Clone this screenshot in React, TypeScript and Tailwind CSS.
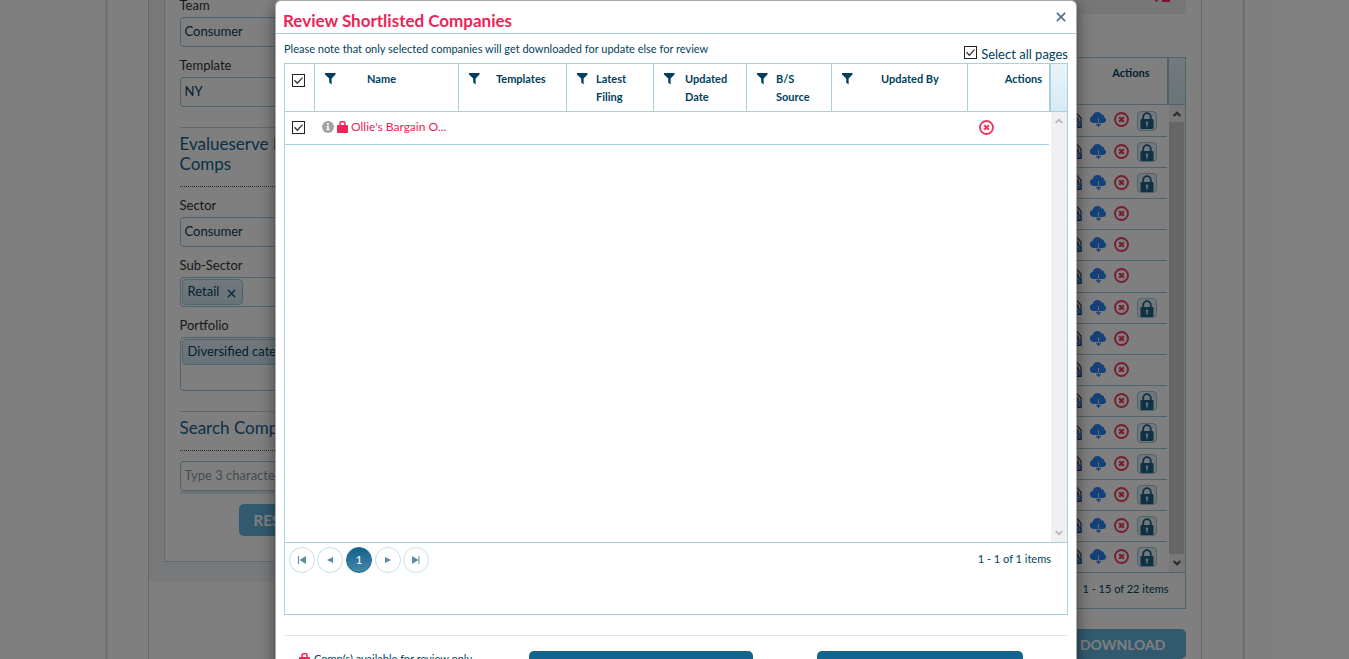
import { useState } from "react";
import type { ReactNode } from "react";
import { clsx } from "clsx";

const lockedRows = [true, true, true, false, false, false, true, false, false, true, true, true, true, true, true];

const columns = [
  { name: "Name", width: "w-[144px]", gap: "pl-[31px]" },
  { name: "Templates", width: "w-[108px]", gap: "pl-4" },
  { name: "Latest Filing", width: "w-[87px]", gap: "pl-2" },
  { name: "Updated Date", width: "w-[93px]", gap: "pl-[10px]" },
  { name: "B/S Source", width: "w-[85px]", gap: "pl-2 pr-4" },
  { name: "Updated By", width: "w-[136px]", gap: "pl-7" },
];

function FilterIcon() {
  return (
    <svg className="mt-[9px] shrink-0" width="11" height="12" viewBox="0 0 11 12" aria-hidden="true">
      <path d="M0 0h10.500v1.600L6.600 5.500v6L4.200 9.500v-4L0 1.600z" fill="#003f5e" />
    </svg>
  );
}

function RemoveIcon() {
  return (
    <svg width="15" height="15" viewBox="0 0 15 15" fill="none" stroke="#ee3a62" aria-hidden="true">
      <circle cx="7.5" cy="7.5" r="6.5" strokeWidth="1.900" />
      <path d="M5.2 5.2l4.6 4.6M9.8 5.2L5.2 9.8" strokeWidth="2.100" />
    </svg>
  );
}

function CloudIcon() {
  return (
    <svg width="16" height="15" viewBox="0 0 16 15" aria-hidden="true">
      <path
        d="M3.600 11A3.600 3.600 0 0 1 2.600 3.900C3.200 1.500 5.200 0 7.400 0c1.900 0 3.300.9 4 2.300 1.900 0 3 1.300 2.900 2.900 1 .5 1.700 1.500 1.700 2.700C16 9.700 14.700 11 13 11z"
        fill="#2a83f0"
      />
      <path d="M8.500 6v5" stroke="#b9d8fb" strokeWidth="1" />
      <path d="M8.500 11v3M6.300 12l2.200 2.300 2.200-2.300" stroke="#2a83f0" strokeWidth="1.100" fill="none" />
    </svg>
  );
}

function ReviewIcon() {
  return (
    <svg width="16" height="16" viewBox="0 0 16 16" aria-hidden="true">
      <path d="M1 0.700h9L15 6v9.300H1z" fill="#f0f0f0" stroke="#3c3c50" strokeWidth="1.200" />
      <path d="M9.500 3.500l3 3.500v5" stroke="#3c3c50" strokeWidth="1" fill="none" />
      <path d="M8.500 4.500v5l5 5.500H15v-3l-4-4.500V6z" stroke="#2456b0" strokeWidth="1.100" fill="#64aaf0" />
    </svg>
  );
}

function PadlockIcon() {
  return (
    <svg width="14" height="17" viewBox="0 0 14 17" aria-hidden="true">
      <path d="M3.200 8V5a3.800 3.800 0 0 1 7.600 0v3" fill="none" stroke="#1c6288" strokeWidth="1.800" />
      <rect x="0.500" y="7" width="13" height="10" rx="1" fill="#1c6288" />
      <path d="M7 9.500a1.300 1.300 0 0 1 .7 2.400v2.600H6.300v-2.600A1.300 1.300 0 0 1 7 9.500z" fill="#d8e8f0" />
    </svg>
  );
}

function BagLockIcon() {
  return (
    <svg className="shrink-0" width="11" height="12" viewBox="0 0 11 12" aria-hidden="true">
      <path d="M3 5V2.200C3 1.300 3.600.8 4.300.8h2.400C7.400.8 8 1.300 8 2.200V5" fill="none" stroke="#f0245a" strokeWidth="1.500" />
      <rect y="4" width="11" height="8" rx="0.800" fill="#f0245a" />
    </svg>
  );
}

function Chevron({ up, className }: { up?: boolean; className?: string }) {
  return (
    <svg width="8" height="6" viewBox="0 0 8 6" fill="none" stroke="currentColor" strokeWidth="2" className={className} aria-hidden="true">
      <path d={up ? "M0.700 5L4 1.700 7.300 5" : "M0.700 1L4 4.300 7.300 1"} />
    </svg>
  );
}

function Tick({ label, id }: { label?: string; id: string }) {
  const [on, setOn] = useState(true);
  return (
    <span className="grid w-[13px] shrink-0">
      <input
        id={id}
        type="checkbox"
        aria-label={label}
        checked={on}
        onChange={() => setOn(!on)}
        className="col-start-1 row-start-1 size-[13px] appearance-none border border-[#222222] bg-white"
      />
      {on && (
        <svg className="pointer-events-none col-start-1 row-start-1" width="13" height="13" viewBox="0 0 13 13" fill="none" stroke="#333333" strokeWidth="1.300" aria-hidden="true">
          <path d="M2.500 6.300l2.800 2.900 5.200-5.600" />
        </svg>
      )}
    </span>
  );
}

function Field({ label, children, id }: { label: string; id: string; children: ReactNode }) {
  return (
    <div className="pt-2">
      <label htmlFor={id} className="block pb-0.5 text-[13px] leading-5 text-[#333333]">
        {label}
      </label>
      {children}
    </div>
  );
}

const box = "w-full rounded-[4px] border border-[#9cc8da] bg-white";
const textBox = "h-[30px] px-1 pb-0.5 text-[13px] text-[#003f5e] placeholder:text-[#8a9aa4]";

function Tag({ text }: { text: string }) {
  return (
    <span className="flex h-[26px] shrink-0 items-center gap-2 rounded-[4px] border border-[#9cc8da] bg-linear-to-b from-[#e6f1f7] to-[#cfe6f1] pr-1.5 pl-[5px] text-[13px] whitespace-nowrap text-[#003f5e]">
      {text}
      <button type="button" aria-label={`Remove ${text}`} className="mt-0.5">
        <svg width="9" height="9" viewBox="0 0 9 9" stroke="#1b5777" strokeWidth="1.500" aria-hidden="true">
          <path d="M0.800 0.800l7.400 7.400M8.200 0.800L0.800 8.200" />
        </svg>
      </button>
    </span>
  );
}

function SectionTitle({ children }: { children: ReactNode }) {
  return (
    <div className="mt-5 border-t border-[#c9ced2]">
      <h2 className="border-b border-dotted border-[#555555] pt-[6px] pb-3 text-[17px] leading-5 whitespace-nowrap text-[#13608c]">{children}</h2>
    </div>
  );
}

function Sidebar() {
  return (
    <aside className="shrink-0 bg-[#f0f2f7] px-[15px] pb-5">
      <form className="w-[247px] border border-t-0 border-[#cdd2d8] bg-white px-[15px] pt-[3px] pb-[25px]">
        <Field label="Team" id="team">
          <input id="team" className={clsx(box, textBox)} defaultValue="Consumer" />
        </Field>
        <Field label="Template" id="template">
          <input id="template" className={clsx(box, textBox)} defaultValue="NY" />
        </Field>
        <SectionTitle>
          Evalueserve Public
          <br />
          Comps
        </SectionTitle>
        <Field label="Sector" id="sector">
          <input id="sector" className={clsx(box, textBox)} defaultValue="Consumer" />
        </Field>
        <Field label="Sub-Sector" id="subsector">
          <div className={clsx(box, "flex h-[30px] overflow-hidden p-px")}>
            <Tag text="Retail" />
            <input id="subsector" className="min-w-0 flex-1" />
          </div>
        </Field>
        <Field label="Portfolio" id="portfolio">
          <div className={clsx(box, "flex h-[54px] overflow-hidden p-px")}>
            <Tag text="Diversified catering" />
            <input id="portfolio" className="min-w-0 flex-1" />
          </div>
        </Field>
        <SectionTitle>Search Company</SectionTitle>
        <div className="mt-2.5 border-b-3 border-[#dbe8f3]">
          <input aria-label="Search Company" className={clsx(box, textBox, "block")} placeholder="Type 3 characters" />
        </div>
        <div className="mt-2.5 flex justify-center">
          <button type="button" className="h-8 w-[97px] rounded-[5px] bg-[#62b4de] px-[15px] text-left text-[15px] font-bold text-white">
            RESET
          </button>
        </div>
      </form>
    </aside>
  );
}

function CompanyList() {
  return (
    <section className="flex min-w-0 flex-1 flex-col pr-[15px]">
      <div className="flex h-[30px] items-end justify-end gap-0.5 overflow-hidden bg-[#efeff1] pr-[15px] pb-3">
        <svg width="18" height="14" viewBox="0 0 18 14" aria-hidden="true">
          <path d="M0 10l3.500 4L7 10zM9 11.500h8V14H9z" fill="#f0245a" />
        </svg>
      </div>
      <div className="mt-[43px] border border-[#9cc8da]">
        <div className="flex border-b border-[#9cc8da]">
          <table className="flex-1 border-separate border-spacing-0">
            <thead>
              <tr>
                <th className="h-[47px] border-b border-[#9cc8da] pt-[6px] pr-[17px] text-right align-top text-[11px] leading-[18px] font-bold text-[#003f5e]">Actions</th>
              </tr>
            </thead>
            <tbody>
              {lockedRows.map((locked, i) => (
                <tr key={i}>
                  <td className={clsx(i === 14 ? "h-[30px]" : i % 5 === 0 ? "h-8" : "h-[31px]", "p-0", i < 14 && "border-b border-[#9cc8da]")}>
                    <div className="flex items-center justify-end gap-2 pr-[10px]">
                      <button type="button" aria-label="Review" className="pb-0.5"><ReviewIcon /></button>
                      <button type="button" aria-label="Download" className="pb-0.5"><CloudIcon /></button>
                      <button type="button" aria-label="Remove" className="pb-0.5"><RemoveIcon /></button>
                      {locked ? (
                        <button type="button" aria-label="Locked" className="grid size-5 place-items-center rounded-[4px] border border-[#9cc8da] bg-[#e2eef4]">
                          <PadlockIcon />
                        </button>
                      ) : (
                        <span className="size-5" />
                      )}
                    </div>
                  </td>
                </tr>
              ))}
            </tbody>
          </table>
          <div className="flex w-[18px] flex-col">
            <div className="h-[47px] border-b border-l-2 border-[#9cc8da] bg-linear-to-b from-[#e8f3f8] to-[#d6e9f3]" />
            <div className="ml-0.5 flex flex-1 flex-col items-center bg-[#f0f0f0]">
              <div className="flex h-[17px] items-center text-[#505050]"><Chevron up /></div>
              <div className="w-[15px] flex-1 bg-[#cdcdcd]" />
              <div className="flex h-[18px] items-center text-[#505050]"><Chevron /></div>
            </div>
          </div>
        </div>
        <p className="h-[35px] pt-[7px] pr-4 text-right text-[11px] leading-[18px] text-[#003f5e]">1 - 15 of 22 items</p>
      </div>
      <button type="button" className="mt-5 h-[30px] w-[130px] self-end rounded-[5px] bg-[#62b4de] pr-5 text-right text-[14px] font-bold text-white">
        DOWNLOAD
      </button>
    </section>
  );
}

function PageButton({ label, path }: { label: string; path: string }) {
  return (
    <button type="button" aria-label={label} className="grid size-[26px] place-items-center rounded-full border border-[#c3dfeb] bg-white">
      <svg width="10" height="8" viewBox="0 0 10 8" aria-hidden="true">
        <path d={path} fill="#5f8ba1" />
      </svg>
    </button>
  );
}

function ReviewDialog() {
  return (
    <div role="dialog" aria-labelledby="dialog-title" className="w-full max-w-[802px] rounded-[6px] border border-[#aaaaaa] bg-white text-[#003f5e] shadow-[0_5px_15px_rgba(0,0,0,0.5)]">
      <header className="flex h-[33px] items-center justify-between border-b border-[#a6cfe0] pr-[10px] pl-[7px]">
        <h1 id="dialog-title" className="mt-[7px] text-[17px] leading-5 font-bold text-[#ee2457]">Review Shortlisted Companies</h1>
        <button type="button" aria-label="Close">
          <svg width="10" height="10" viewBox="0 0 9 9" stroke="#447089" strokeWidth="1.400" aria-hidden="true">
            <path d="M0.800 0.800l7.400 7.400M8.200 0.800L0.800 8.200" />
          </svg>
        </button>
      </header>
      <div className="px-2">
        <div className="flex h-[29px] justify-between">
          <p className="pt-[6px] text-[11px] leading-[18px]">Please note that only selected companies will get downloaded for update else for review</p>
          <div className="flex items-start gap-1 pt-3">
            <Tick id="all-pages" />
            <label htmlFor="all-pages" className="text-[13px] leading-4">Select all pages</label>
          </div>
        </div>
        <div className="border border-[#a6d3e3]">
          <div className="flex h-[479px] border-b border-[#a6cfe0]">
            <div className="flex-1">
              <table className="w-full table-fixed border-separate border-spacing-0">
                <thead>
                  <tr>
                    <th className="h-12 w-[30px] border-r border-b border-[#a6cfe0] p-0 pt-[10px] pl-[7px] align-top">
                      <Tick id="select-all" label="Select all" />
                    </th>
                    {columns.map((c) => (
                      <th key={c.name} className={clsx(c.width, "h-12 border-r border-b border-[#a6cfe0] p-0 align-top")}>
                        <div className="flex items-start pl-[10px]">
                          <FilterIcon />
                          <span className={clsx(c.gap, "pt-[6px] text-left text-[11px] leading-[18px] font-bold")}>{c.name}</span>
                        </div>
                      </th>
                    ))}
                    <th className="h-12 border-b border-[#a6cfe0] pt-[6px] pr-[7px] text-right align-top text-[11px] leading-[18px] font-bold">Actions</th>
                  </tr>
                </thead>
                <tbody>
                  <tr>
                    <td className="h-[33px] border-b border-[#a6d3e3] p-0 pb-0.5 pl-[7px]">
                      <Tick id="select-row" label="Select Ollie's Bargain Outlet" />
                    </td>
                    <td className="border-b border-[#a6d3e3] p-0 pb-0.5 pl-[7px]">
                      <div className="flex items-center gap-[3px]">
                        <svg className="shrink-0" width="12" height="12" viewBox="0 0 12 12" aria-hidden="true">
                          <circle cx="6" cy="6" r="6" fill="#a2a2a2" />
                          <path d="M4.500 5h2.300v3.300h.9v1H4.300v-1h.9V6h-.7zM5 2.300h1.800V4H5z" fill="white" />
                        </svg>
                        <BagLockIcon />
                        <a href="#company" className="text-[12px] leading-[18px] text-[#ee2457]">Ollie's Bargain O...</a>
                      </div>
                    </td>
                    <td colSpan={5} className="border-b border-[#a6d3e3] p-0" />
                    <td className="border-b border-[#a6d3e3] p-0 pb-0.5 pl-[11px]">
                      <button type="button" aria-label="Remove company" className="block"><RemoveIcon /></button>
                    </td>
                  </tr>
                </tbody>
              </table>
            </div>
            <div className="flex w-[18px] flex-col">
              <div className="h-12 border-b border-l-2 border-[#a6cfe0] bg-linear-to-b from-[#eaf4f9] to-[#d6eaf4]" />
              <div className="ml-0.5 flex flex-1 flex-col items-center justify-between bg-[#f0f0f0] py-[6px] text-[#bfbfbf]">
                <Chevron up />
                <Chevron />
              </div>
            </div>
          </div>
          <div className="flex h-[71px] items-start justify-between pt-1 pr-4 pl-1">
            <nav aria-label="Pages" className="flex gap-0.5">
              <PageButton label="First page" path="M1 0h1v8H1zM9 0v8L2.500 4z" />
              <PageButton label="Previous page" path="M8 1v6L2 4z" />
              <button type="button" className="mx-px grid size-[26px] place-items-center rounded-full border border-[#1d6a8f] bg-linear-to-b from-[#13608a] to-[#4288a8] text-[12px] text-white">1</button>
              <PageButton label="Next page" path="M2 1v6l6-3z" />
              <PageButton label="Last page" path="M7.500 0h1v8h-1zM1 0v8l6.500-4z" />
            </nav>
            <p className="pt-[3px] text-[11px] leading-[18px]">1 - 1 of 1 items</p>
          </div>
        </div>
        <footer className="mt-5 flex items-start border-t border-[#e5e5e5] pt-[15px] pb-4">
          <p className="flex flex-1 items-center gap-1 pl-[15px] text-[11px] leading-4">
            <BagLockIcon />
            Comp(s) available for review only
          </p>
          <button type="button" className="h-8 w-[224px] rounded-[5px] bg-[#13648f] text-[15px] font-bold text-white" aria-label="Download" />
          <button type="button" className="mr-[45px] ml-16 h-8 w-[206px] rounded-[5px] bg-[#13648f] text-[15px] font-bold text-white" aria-label="Cancel" />
        </footer>
      </div>
    </div>
  );
}

export default function App() {
  return (
    <div className="relative h-screen overflow-hidden bg-white font-['Lato','Noto_Sans',sans-serif]">
      <main className="mx-auto -mt-4 h-[calc(100vh+16px)] max-w-[1140px] border-x-3 border-[#dbe8f3] px-10">
        <div className="flex h-full items-start border-x border-[#cdd2d8]">
          <Sidebar />
          <CompanyList />
        </div>
      </main>
      <div className="absolute inset-0 flex items-start justify-center bg-black/50 pl-[3px]">
        <ReviewDialog />
      </div>
    </div>
  );
}
